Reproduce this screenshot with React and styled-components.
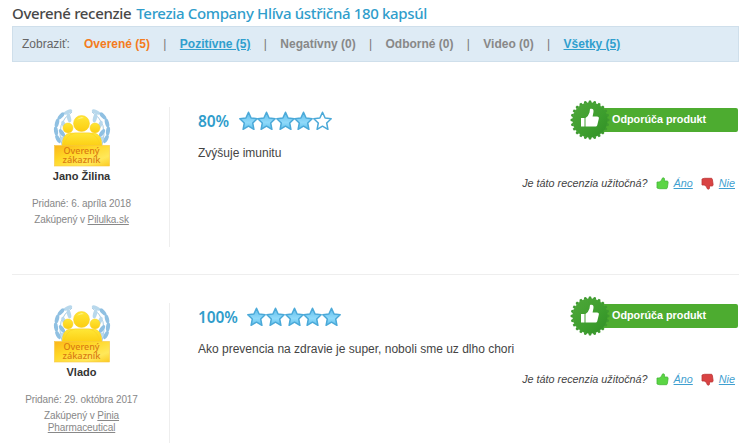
import React from 'react';
import styled, { createGlobalStyle } from 'styled-components';

const filters = [
  { label: 'Overené (5)', kind: 'active' },
  { label: 'Pozitívne (5)', kind: 'link' },
  { label: 'Negatívny (0)', kind: 'empty' },
  { label: 'Odborné (0)', kind: 'empty' },
  { label: 'Video (0)', kind: 'empty' },
  { label: 'Všetky (5)', kind: 'link' },
];

const reviews = [
  {
    name: 'Jano Žilina',
    date: '6. apríla 2018',
    shop: 'Pilulka.sk',
    percent: 80,
    text: 'Zvýšuje imunitu',
  },
  {
    name: 'Vlado',
    date: '29. októbra 2017',
    shop: 'Pinia Pharmaceutical',
    percent: 100,
    text: 'Ako prevencia na zdravie je super, noboli sme uz dlho chori',
  },
];

const leaves = [
  [15, 3, 66], [8, 7, 42], [16, 9, -15], [4, 14, 15], [11, 16, -25],
  [3, 22, -8], [9, 24, -35], [5, 30, -28], [11, 31, -45],
];

const CustomerBadge = () => (
  <svg width="60" height="60" viewBox="0 0 60 60">
    <defs>
      <linearGradient id="gold" x1="0" y1="0" x2="0" y2="1">
        <stop offset="0" stopColor="#ffe736" />
        <stop offset="1" stopColor="#fccd12" />
      </linearGradient>
      <linearGradient id="plate" x1="0" y1="0" x2="1" y2="1">
        <stop offset="0" stopColor="#fbb51b" />
        <stop offset="0.35" stopColor="#ffd624" />
        <stop offset="0.75" stopColor="#ffe85a" />
        <stop offset="1" stopColor="#fbcb22" />
      </linearGradient>
      <g id="branch">
        <path d="M19 3Q2 14 9 36" fill="none" stroke="#a9cce4" strokeWidth="1" />
        {leaves.map(([x, y, angle]) => (
          <ellipse
            key={`${x}-${y}`}
            cx={x}
            cy={y}
            rx="2"
            ry="4.500"
            fill={x < 10 ? '#8fc0e2' : '#b8d8ec'}
            transform={`rotate(${angle} ${x} ${y})`}
          />
        ))}
      </g>
    </defs>
    <use href="#branch" x="1" y="2" />
    <use href="#branch" transform="translate(59 2) scale(-1 1)" />
    <g fill="url(#gold)" stroke="#f8ce22" strokeWidth="0.5">
      <circle cx="16" cy="21" r="5" />
      <circle cx="43" cy="21" r="5" />
      <path d="M10 40q0-13 8-14h24q8 1 8 14z" />
      <path d="M12 40q1-12 11-14h14q10 2 11 14z" />
      <circle cx="29.500" cy="16.500" r="8" />
    </g>
    <path d="M25 13q3-4 7-2-5 0-7 2" fill="#fff6a0" />
    <rect x="2.500" y="38.500" width="55" height="20.500" fill="url(#plate)" stroke="#f7c640" strokeWidth="0.600" />
    <BadgeText x="29.500" y="47" textLength="36" lengthAdjust="spacingAndGlyphs">Overený</BadgeText>
    <BadgeText x="29.500" y="56" textLength="38" lengthAdjust="spacingAndGlyphs">zákazník</BadgeText>
  </svg>
);

const Star = ({ full }) => (
  <svg width="19" height="20" viewBox="0 0 19 20">
    <defs>
      <linearGradient id="starFill" x1="0" y1="0" x2="0" y2="1">
        <stop offset="0" stopColor="#62bdeb" />
        <stop offset="0.600" stopColor="#8fdafa" />
        <stop offset="1" stopColor="#5fc0ec" />
      </linearGradient>
    </defs>
    <path
      d="M9.500 1.200l2.600 5.800 6.100.7-4.500 4.300 1.200 6.300-5.400-3.100-5.400 3.100 1.200-6.300L.8 7.700l6.100-.7z"
      fill={full ? 'url(#starFill)' : '#fff'}
      stroke="#4ba9d8"
      strokeWidth="1.500"
      strokeLinejoin="round"
    />
  </svg>
);

const Seal = () => (
  <SealSvg width="40" height="40" viewBox="-20 -20 40 40">
    <defs>
      <linearGradient id="seal" x1="0" y1="0" x2="1" y2="1">
        <stop offset="0" stopColor="#4fa83a" />
        <stop offset="0.600" stopColor="#3c9d2d" />
        <stop offset="1" stopColor="#319026" />
      </linearGradient>
    </defs>
    {Array.from({ length: 24 }, (_, i) => (
      <path key={i} d="M-1.800-17L-1-19.400H1L1.800-17z" fill="#3f9a30" transform={`rotate(${i * 15})`} />
    ))}
    <circle r="17.500" fill="url(#seal)" />
    <path
      d="M-9-2h3.500v8.500H-9zM-4.500-2q3-2 4-5.500l.5-3.500c3-1 4 1 3.400 3.500L2.600-3.500H7c1.600 0 2.200 1 1.800 2.200L7.300 5c-.3 1.100-1 1.500-2 1.500h-9.800z"
      fill="#fff"
    />
  </SealSvg>
);

const Thumb = ({ down }) => (
  <svg width="13" height="13" viewBox="0 0 13 13">
    <path
      d="M1 5h2.200l2-1.200L6.500 1c1.600-.5 2.300.4 2 1.900L8.300 4h2.500c1 0 1.400.7 1.300 1.500l-.7 5c-.1.900-.6 1.200-1.300 1.200H3.500L1 11z"
      fill={down ? '#d94343' : '#5bd544'}
      stroke={down ? '#bb3535' : '#45b838'}
      strokeWidth="0.800"
      transform={down ? 'matrix(1 0 0 -1 0 13)' : undefined}
    />
  </svg>
);

const Review = ({ review }) => (
  <ReviewRow>
    <Author>
      <CustomerBadge />
      <Name>{review.name}</Name>
      <Meta>Pridané: {review.date}</Meta>
      <Meta>
        Zakúpený v <ShopLink>{review.shop}</ShopLink>
      </Meta>
    </Author>
    <Content>
      <Rating>
        <Percent>{review.percent}%</Percent>
        <Stars>
          {[20, 40, 60, 80, 100].map((n) => (
            <Star key={n} full={review.percent >= n} />
          ))}
        </Stars>
      </Rating>
      <Comment>{review.text}</Comment>
    </Content>
    <Side>
      <Recommend>
        <Seal />
        Odporúča produkt
      </Recommend>
      <Useful>
        <Question>Je táto recenzia užitočná?</Question>
        <Thumb />
        <VoteLink $gap="8px">Áno</VoteLink>
        <Thumb down />
        <VoteLink>Nie</VoteLink>
      </Useful>
    </Side>
  </ReviewRow>
);

const App = () => (
  <>
    <GlobalStyle />
    <Page>
      <Title>
        Overené recenzie <span>Terezia Company Hlíva ústřičná 180 kapsúl</span>
      </Title>
      <FilterBar>
        <FilterLabel>Zobraziť:</FilterLabel>
        {filters.map(({ label, kind }, i) => (
          <React.Fragment key={label}>
            {i > 0 && <Separator>|</Separator>}
            <Filter $kind={kind}>{label}</Filter>
          </React.Fragment>
        ))}
      </FilterBar>
      <ReviewList>
        {reviews.map((review) => (
          <Review key={review.name} review={review} />
        ))}
      </ReviewList>
    </Page>
  </>
);
export default App;

const GlobalStyle = createGlobalStyle`
  * {
    box-sizing: border-box;
  }
  body {
    margin: 0;
    background: #fff;
    color: #444;
    font-family: "Liberation Sans", Arial, sans-serif;
    font-size: 12px;
  }
`;
const Page = styled.main`
  height: 443px;
  padding: 0 11px 0 12px;
  overflow: hidden;
`;
const Title = styled.h1`
  height: 26px;
  margin: 0;
  font: 500 15px/26px "Noto Sans", sans-serif;
  letter-spacing: -0.34px;
  white-space: nowrap;
  color: #484848;
  span {
    margin-left: 1.5px;
    color: #309dcb;
  }
`;
const FilterBar = styled.nav`
  display: flex;
  align-items: center;
  height: 36px;
  padding: 0 9px;
  border: 1px solid #cfdfeb;
  background: #deebf5;
  white-space: nowrap;
`;
const FilterLabel = styled.span`
  width: 62px;
  color: #666;
`;
const Separator = styled.span`
  width: 29.8px;
  text-align: center;
  color: #777;
`;
const filterColors = { active: '#f47b20', link: '#309fce', empty: '#888' };
const Filter = styled.span`
  font-weight: bold;
  color: ${({ $kind }) => filterColors[$kind]};
  text-decoration: ${({ $kind }) => ($kind === 'link' ? 'underline' : 'none')};
`;
const ReviewList = styled.section`
  padding-top: 17px;
`;
const ReviewRow = styled.article`
  display: grid;
  grid-template-columns: 158px 1fr 218px;
  padding: 28px 0 27px;
  & + & {
    border-top: 1px solid #eee;
  }
`;
const Author = styled.div`
  display: flex;
  flex-direction: column;
  align-items: center;
  height: 140px;
  padding-right: 18px;
  border-right: 1px solid #eee;
  text-align: center;
`;
const BadgeText = styled.text`
  font: 500 8.5px "Noto Sans", sans-serif;
  text-anchor: middle;
  fill: #d97a12;
`;
const Name = styled.div`
  margin: 1px 0 14px;
  font-size: 11px;
  font-weight: bold;
  line-height: 16px;
  color: #333;
`;
const Meta = styled.div`
  width: 130px;
  margin-bottom: 4px;
  font-size: 10px;
  letter-spacing: -0.1px;
  line-height: 12px;
  color: #888;
`;
const ShopLink = styled.span`
  text-decoration: underline;
`;
const Content = styled.div`
  padding: 3px 0 0 28px;
`;
const Rating = styled.div`
  display: flex;
  align-items: center;
  gap: 9.5px;
  height: 22px;
`;
const Percent = styled.span`
  font: 600 15.5px/22px "Noto Sans", sans-serif;
  letter-spacing: -0.1px;
  color: #309dcb;
`;
const Stars = styled.div`
  display: flex;
  svg + svg {
    margin-left: -0.4px;
  }
`;
const Comment = styled.p`
  margin: 13px 0 0;
  line-height: 16px;
  white-space: nowrap;
`;
const Side = styled.div`
  display: flex;
  flex-direction: column;
  align-items: flex-end;
`;
const Recommend = styled.div`
  position: relative;
  width: 149px;
  height: 24px;
  margin: 1px 1px 0 0;
  padding-left: 23px;
  border-radius: 2px;
  background: #4dac30;
  font-size: 10.8px;
  font-weight: bold;
  line-height: 23px;
  color: #fff;
`;
const SealSvg = styled.svg`
  position: absolute;
  left: -19px;
  top: -8px;
`;
const Useful = styled.div`
  display: flex;
  align-items: center;
  margin: 43px 4px 0 0;
  font-size: 10.8px;
  font-style: italic;
  line-height: 16px;
  white-space: nowrap;
`;
const Question = styled.span`
  margin-right: 8px;
`;
const VoteLink = styled.a`
  margin-left: 5px;
  margin-right: ${({ $gap }) => $gap || 0};
  color: #3f9fd0;
  text-decoration: underline;
`;
